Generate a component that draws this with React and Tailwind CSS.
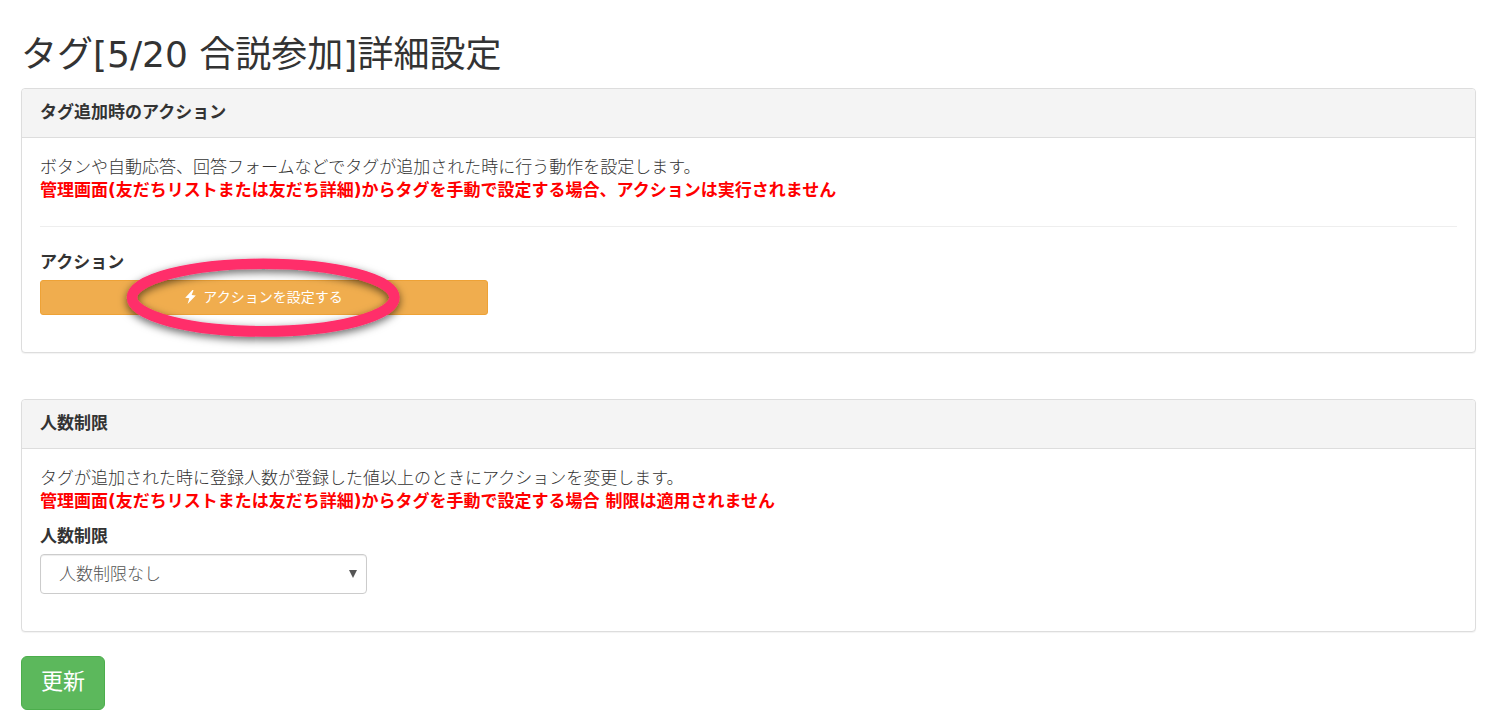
import { useState } from 'react';

function Panel({ title, children }) {
  return (
    <section className="rounded border border-[#dddddd] bg-white shadow-[0_1px_1px_rgba(0,0,0,0.05)]">
      <h2 className="rounded-t border-b border-[#dddddd] bg-[#f4f4f4] px-[18px] pt-3 pb-[13px] text-[17px] leading-[23px] font-bold">
        {title}
      </h2>
      <div className="px-[18px] pt-[18px] pb-[37px]">{children}</div>
    </section>
  );
}

function Description({ text, warning }) {
  return (
    <p className="font-light">
      {text}
      <br />
      <strong className="font-bold text-[#ff0000]">{warning}</strong>
    </p>
  );
}

function BoltIcon() {
  return (
    <svg viewBox="0 0 11 14" className="h-[14px] w-[11px]" fill="currentColor" aria-hidden="true">
      <path d="M7.4 0 L0.2 7.8 L4.3 8.2 L2.6 14 L10.8 5.4 L6.6 5 L8.6 0.3 Z" />
    </svg>
  );
}

// Hand-drawn style ring that points at the action button
function HighlightRing() {
  return (
    <svg
      viewBox="0 0 296 102"
      className="pointer-events-none absolute -top-[33px] left-[75px] h-[102px] w-[296px]"
      aria-hidden="true"
    >
      <defs>
        <filter id="ring-shadow" x="-10%" y="-20%" width="120%" height="150%">
          <feDropShadow dx="0" dy="3" stdDeviation="4" floodColor="#000000" floodOpacity="0.6" />
        </filter>
      </defs>
      <ellipse
        cx="148.2"
        cy="50.6"
        rx="131.2"
        ry="33.8"
        fill="none"
        stroke="#ff2d6b"
        strokeWidth="10.6"
        filter="url(#ring-shadow)"
      />
    </svg>
  );
}

export default function App() {
  const [limit, setLimit] = useState('none');

  return (
    <main className="pt-[33px] pr-[9px] pb-3 pl-[21px] font-['DejaVu_Sans','Noto_Sans_CJK_JP',sans-serif] text-[17px] leading-[23px] text-[#333333]">
      <h1 className="mb-[11px] text-4xl leading-[44px]">タグ[5/20 合説参加]詳細設定</h1>

      <Panel title="タグ追加時のアクション">
        <Description
          text="ボタンや自動応答、回答フォームなどでタグが追加された時に行う動作を設定します。"
          warning="管理画面(友だちリストまたは友だち詳細)からタグを手動で設定する場合、アクションは実行されません"
        />
        <hr className="my-6 border-[#eeeeee]" />
        <h3 className="mb-[6px] font-bold">アクション</h3>
        <div className="relative max-w-md">
          <button
            type="button"
            className="flex h-[35px] w-full items-center justify-center gap-[7px] rounded-[3px] border border-[#eea236] bg-[#f0ad4e] pb-px text-sm text-white"
          >
            <BoltIcon />
            アクションを設定する
          </button>
          <HighlightRing />
        </div>
      </Panel>

      <div className="mt-[46px]">
        <Panel title="人数制限">
          <Description
            text="タグが追加された時に登録人数が登録した値以上のときにアクションを変更します。"
            warning="管理画面(友だちリストまたは友だち詳細)からタグを手動で設定する場合 制限は適用されません"
          />
          <label htmlFor="limit" className="mt-3 mb-[6px] block font-bold">
            人数制限
          </label>
          <div className="relative max-w-[327px]">
            <select
              id="limit"
              value={limit}
              onChange={e => setLimit(e.target.value)}
              className="block h-10 w-full appearance-none rounded border border-[#cccccc] bg-white px-[18px] font-light text-[#555555] shadow-[inset_0_1px_1px_rgba(0,0,0,0.075)]"
            >
              <option value="none">人数制限なし</option>
              <option value="limited">人数制限あり</option>
            </select>
            <svg
              viewBox="0 0 8 8"
              className="pointer-events-none absolute top-4 right-[10px] h-2 w-2"
              fill="#555555"
              aria-hidden="true"
            >
              <path d="M0 0 H8 L4 8 Z" />
            </svg>
          </div>
        </Panel>
      </div>

      <button
        type="submit"
        className="mt-6 block rounded-md border border-[#4cae4c] bg-[#5cb85c] px-[19px] pt-[11px] pb-[13px] text-[22px] leading-[28px] text-white"
      >
        更新
      </button>
    </main>
  );
}
